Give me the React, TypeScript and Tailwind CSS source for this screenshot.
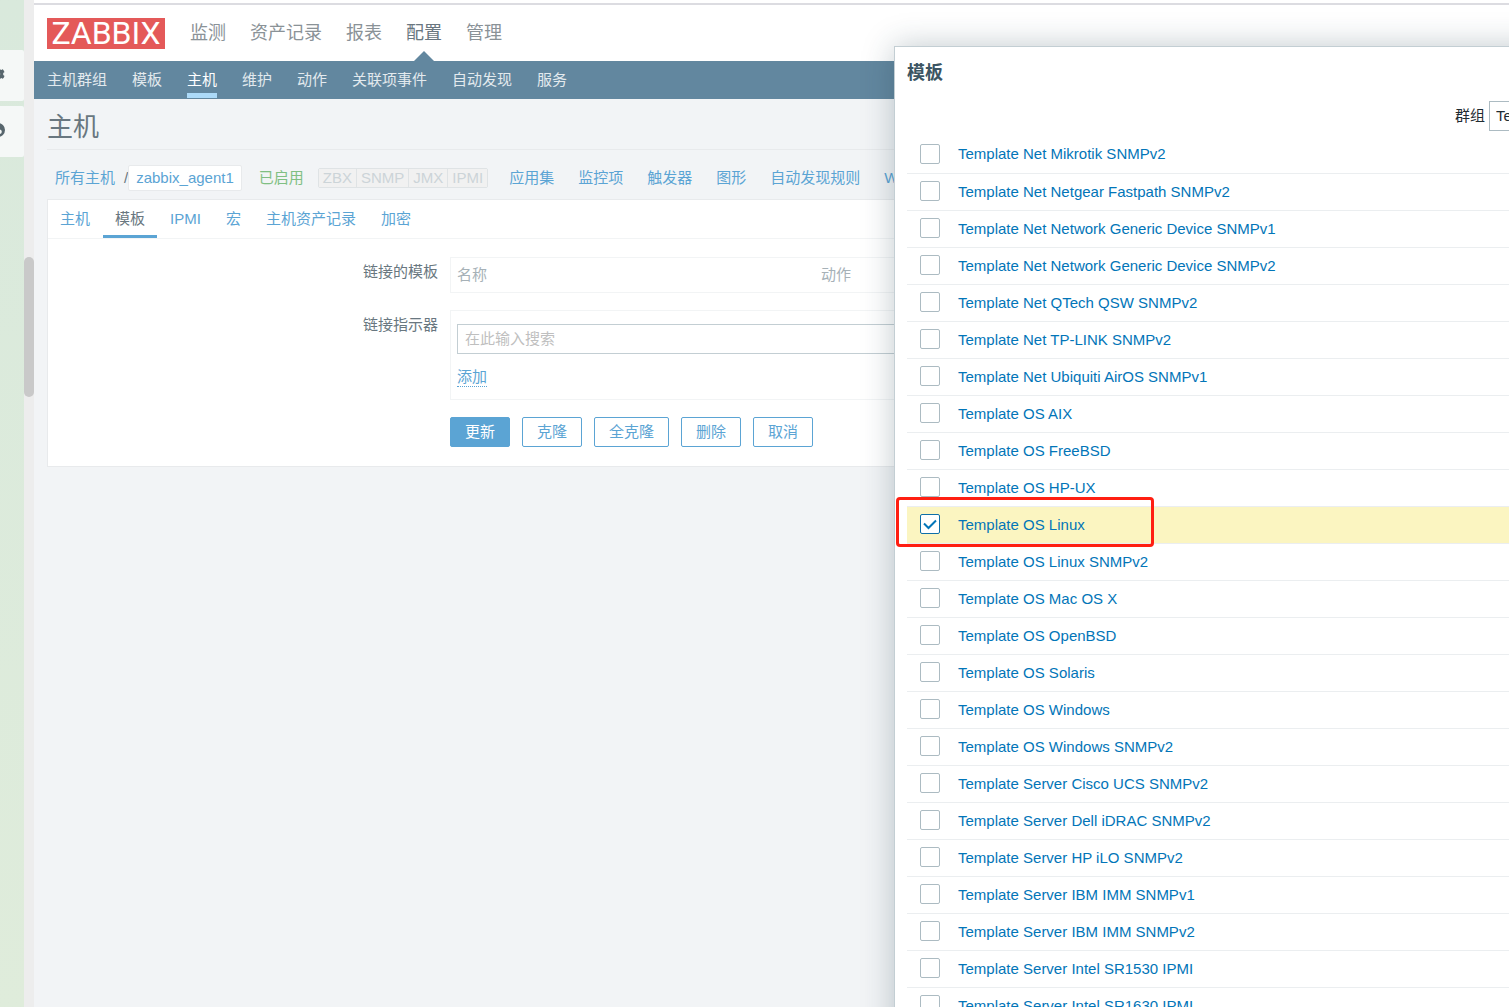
import React, { useState } from "react";
import { FaCog } from "react-icons/fa";

const mainMenu = ["监测", "资产记录", "报表", "配置", "管理"];
const subMenu = ["主机群组", "模板", "主机", "维护", "动作", "关联项事件", "自动发现", "服务"];
const interfaces = ["ZBX", "SNMP", "JMX", "IPMI"];
const hostLinks = ["应用集", "监控项", "触发器", "图形", "自动发现规则", "Web监测"];
const tabs = ["主机", "模板", "IPMI", "宏", "主机资产记录", "加密"];
const actions = ["克隆", "全克隆", "删除", "取消"];
const templates = [
  "Template Net Mikrotik SNMPv2",
  "Template Net Netgear Fastpath SNMPv2",
  "Template Net Network Generic Device SNMPv1",
  "Template Net Network Generic Device SNMPv2",
  "Template Net QTech QSW SNMPv2",
  "Template Net TP-LINK SNMPv2",
  "Template Net Ubiquiti AirOS SNMPv1",
  "Template OS AIX",
  "Template OS FreeBSD",
  "Template OS HP-UX",
  "Template OS Linux",
  "Template OS Linux SNMPv2",
  "Template OS Mac OS X",
  "Template OS OpenBSD",
  "Template OS Solaris",
  "Template OS Windows",
  "Template OS Windows SNMPv2",
  "Template Server Cisco UCS SNMPv2",
  "Template Server Dell iDRAC SNMPv2",
  "Template Server HP iLO SNMPv2",
  "Template Server IBM IMM SNMPv1",
  "Template Server IBM IMM SNMPv2",
  "Template Server Intel SR1530 IPMI",
  "Template Server Intel SR1630 IPMI",
];

function SideStrip() {
  return (
    <aside className="flex shrink-0">
      <div className="flex w-6 flex-col gap-[5px] overflow-hidden bg-linear-to-b from-[#d9e9dc] to-[#dfecdb] pt-[50px]">
        <button aria-label="设置" className="flex h-[51px] items-center rounded-r-xs bg-[#f5f8f7] pb-[3px] text-[#57666d]">
          <FaCog className="-ml-[9px] size-[14px] shrink-0" />
        </button>
        <button aria-label="主题" className="flex h-[51px] items-center rounded-r-xs bg-[#f5f8f7] pb-[3px] text-[#57666d]">
          <svg className="-ml-[9px] size-[14px] shrink-0" viewBox="0 0 14 14">
            <path fill="currentColor" fillRule="evenodd" d="M7 0a7 7 0 1 1 0 14A7 7 0 0 1 7 0zM8.500 6.500a2.300 2.300 0 1 0 .01 4.600a2.300 2.300 0 0 0-.01-4.600z" />
          </svg>
        </button>
      </div>
      <div className="w-[10px] bg-[#ededed] pt-[257px]">
        <div className="h-[140px] rounded-full bg-[#c9c9c9]" />
      </div>
    </aside>
  );
}

function Header() {
  return (
    <header>
      <div className="mt-[3px] flex h-[58px] items-center gap-[25px] border-t-2 border-[#dcdce1] bg-white pl-[13px]">
        <a
          href="#home"
          className="flex h-[31px] w-[118px] items-center justify-center bg-[#e45959] font-['Roboto',sans-serif] text-[32px] leading-[31px] text-white"
        >
          ZABBIX
        </a>
        <nav className="flex gap-6 self-stretch text-[18px] leading-[56px]">
          {mainMenu.map((m) => (
            <a key={m} href="#menu" className={m === "配置" ? "relative text-[#697780]" : "text-[#8a9297]"}>
              {m}
              {m === "配置" && (
                <svg className="absolute bottom-0 left-1/2 h-[10px] w-5 -translate-x-1/2" viewBox="0 0 20 10">
                  <path d="M0 10L10 0l10 10z" fill="#62879f" />
                </svg>
              )}
            </a>
          ))}
        </nav>
      </div>
      <nav className="flex h-[38px] gap-[25px] bg-[#62879f] pl-[13px] leading-[38px] text-[#e3eaee]">
        {subMenu.map((m) => (
          <a
            key={m}
            href="#submenu"
            className={m === "主机" ? "relative text-white after:absolute after:inset-x-0 after:bottom-px after:h-[5px] after:bg-[#acdaf8]" : ""}
          >
            {m}
          </a>
        ))}
      </nav>
    </header>
  );
}

function HostBar() {
  return (
    <div className="flex h-[49px] items-center pt-[7px] pl-2 leading-[24px] text-[#5ba4d4]">
      <a href="#hosts">所有主机</a>
      <span className="ml-[9px] text-[#697780]">/</span>
      <a href="#host" className="rounded-xs border border-[#e8eaec] bg-white px-[7px]">
        zabbix_agent1
      </a>
      <span className="ml-[17px] text-[#80bf83]">已启用</span>
      <span className="ml-[14px] flex rounded-xs border border-[#dfe3e5] leading-[18px] text-[#ccd4d8]">
        {interfaces.map((name) => (
          <span key={name} className="border-l border-[#dfe3e5] bg-[#f1f1f1] px-1 first:border-l-0">
            {name}
          </span>
        ))}
      </span>
      <div className="ml-[21px] flex gap-6">
        {hostLinks.map((l) => (
          <a key={l} href="#link">
            {l}
          </a>
        ))}
      </div>
    </div>
  );
}

function HostForm() {
  return (
    <form className="mr-3 border border-[#e8eaec] bg-white" onSubmit={(e) => e.preventDefault()}>
      <div role="tablist" className="flex h-[39px] gap-px border-b border-[#f2f4f5] text-[#5ba4d4]">
        {tabs.map((t) => (
          <button
            key={t}
            type="button"
            role="tab"
            aria-selected={t === "模板"}
            className="border-b-3 border-transparent px-3 pt-[2px] aria-selected:border-[#5ba4d4] aria-selected:text-[#697780]"
          >
            {t}
          </button>
        ))}
      </div>
      <div className="grid grid-cols-[390px_minmax(0,1fr)] gap-x-3 pt-[18px] pr-3 pb-[19px] text-[#697780]">
        <span className="h-[53px] pt-1 text-right leading-[22px]">链接的模板</span>
        <table className="h-9 w-full table-fixed border-separate border-spacing-0 self-start border border-[#f2f4f5] text-[#a6b1b7]">
          <thead>
            <tr className="text-left">
              <th className="w-[364px] pl-[6px] font-normal">名称</th>
              <th className="pl-[6px] font-normal">动作</th>
            </tr>
          </thead>
        </table>
        <label htmlFor="link-search" className="pt-1 text-right leading-[22px]">
          链接指示器
        </label>
        <div className="border border-[#f2f4f5] px-[6px] pt-[13px] pb-[11px]">
          <input
            id="link-search"
            type="text"
            placeholder="在此输入搜索"
            className="block h-[30px] w-full border border-[#c3ced3] px-[7px] pb-[2px] placeholder:text-[#bfbfbf]"
          />
          <button type="button" className="mt-[13px] border-b border-dotted border-[#5ba4d4] leading-[19px] text-[#5ba4d4]">
            添加
          </button>
        </div>
        <div className="col-start-2 mt-[17px] flex gap-3">
          <button className="h-[30px] rounded-xs border border-[#5ba4d4] bg-[#5ba4d4] px-[14px] text-white">更新</button>
          {actions.map((a) => (
            <button key={a} type="button" className="h-[30px] rounded-xs border border-[#5ba4d4] px-[14px] text-[#5ba4d4]">
              {a}
            </button>
          ))}
        </div>
      </div>
    </form>
  );
}

function TemplateDialog() {
  const [picked, setPicked] = useState<string[]>(["Template OS Linux"]);
  const toggle = (t: string) => setPicked((p) => (p.includes(t) ? p.filter((x) => x !== t) : [...p, t]));
  return (
    <section
      role="dialog"
      aria-labelledby="dialog-title"
      className="absolute top-[46px] -right-[141px] -bottom-10 left-[894px] border border-[#c3ced3] bg-white px-3 shadow-[0_0_30px_rgba(31,60,75,0.28)]"
    >
      <h2 id="dialog-title" className="pt-[14px] text-[18px] leading-6 font-bold text-[#3c5563]">
        模板
      </h2>
      <div className="mt-4 mb-[5px] flex items-center justify-end gap-1 text-[#1f2c33]">
        <label htmlFor="group">群组</label>
        <select id="group" className="h-[30px] w-[148px] appearance-none border border-[#acbbc2] bg-white px-[6px]">
          <option>Templates</option>
        </select>
      </div>
      <table className="w-full border-collapse">
        <tbody>
          {templates.map((t) => (
            <tr key={t} className="h-[37px] border-b border-[#ebeef0] has-checked:bg-[#fbf5c1]">
              <td className="w-[51px] pb-px pl-[13px]">
                <span className="grid size-5">
                  <input
                    type="checkbox"
                    id={t}
                    checked={picked.includes(t)}
                    onChange={() => toggle(t)}
                    className="peer col-start-1 row-start-1 size-5 appearance-none rounded-xs border border-[#acbbc2] bg-white checked:border-[#0f6fa8]"
                  />
                  <svg
                    className="pointer-events-none invisible col-start-1 row-start-1 size-5 peer-checked:visible"
                    viewBox="0 0 20 20"
                    fill="none"
                    stroke="#0275b8"
                    strokeWidth="2"
                  >
                    <path d="M4 9.500l4.500 4.500 7.500-7.500" />
                  </svg>
                </span>
              </td>
              <td className="text-[#0275b8]">
                <label htmlFor={t}>{t}</label>
              </td>
            </tr>
          ))}
        </tbody>
      </table>
    </section>
  );
}

export default function App() {
  return (
    <div className="relative flex h-screen overflow-hidden bg-white font-['Liberation_Sans','Noto_Sans_CJK_SC',sans-serif] text-[15px] leading-[22px]">
      <SideStrip />
      <div className="flex min-w-0 flex-1 flex-col">
        <Header />
        <main className="flex-1 bg-[#f2f4f6] pl-[13px]">
          <h1 className="h-[51px] border-b border-[#e8eaec] pt-2 text-[26px] leading-10 text-[#697780]">主机</h1>
          <HostBar />
          <HostForm />
        </main>
      </div>
      <TemplateDialog />
      <div className="pointer-events-none absolute top-[497px] left-[896px] h-[50px] w-[258px] rounded-sm border-3 border-[#ff1f12]" />
    </div>
  );
}
